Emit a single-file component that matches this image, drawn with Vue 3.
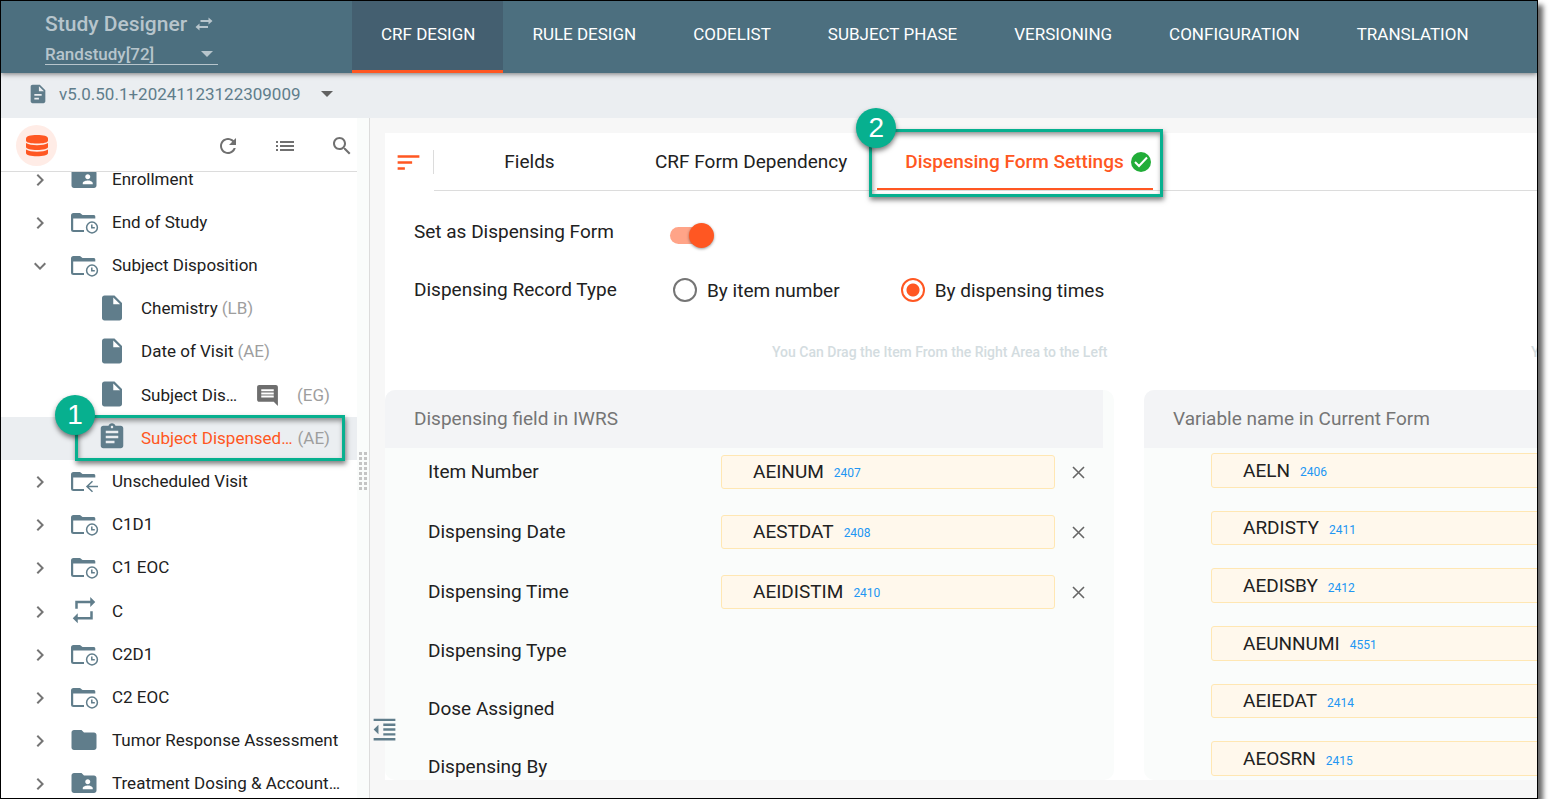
<script setup>
import { ref } from 'vue'

const ICONS = {
  chevron: 'M10 6L8.59 7.41 13.17 12l-4.58 4.59L10 18l6-6z',
  expand: 'M16.59 8.59L12 13.17 7.41 8.59 6 10l6 6 6-6z',
  folder: 'M10 4H4c-1.1 0-1.99.9-1.99 2L2 18c0 1.1.9 2 2 2h16c1.1 0 2-.9 2-2V8c0-1.1-.9-2-2-2h-8l-2-2z',
  shared: 'M20 6h-8l-2-2H4c-1.1 0-1.99.9-1.99 2L2 18c0 1.1.9 2 2 2h16c1.1 0 2-.9 2-2V8c0-1.1-.9-2-2-2zm-5 3c1.1 0 2 .9 2 2s-.9 2-2 2-2-.9-2-2 .9-2 2-2zm4 8h-8v-1c0-1.33 2.67-2 4-2s4 .67 4 2v1z',
  repeat: 'M7 6.500h10v3l4-4-4-4v3H5v6.500h2zM17 17.500H7v-3l-4 4 4 4v-3h12v-6.500h-2z',
  file: 'M6 2c-1.1 0-1.99.9-1.99 2L4 20c0 1.1.89 2 1.99 2H18c1.1 0 2-.9 2-2V8l-6-6H6zm7 7V3.5L18.5 9H13z',
  form: 'M19 3h-4.18C14.4 1.84 13.3 1 12 1c-1.3 0-2.4.84-2.82 2H5c-1.1 0-2 .9-2 2v14c0 1.1.9 2 2 2h14c1.1 0 2-.9 2-2V5c0-1.1-.9-2-2-2zm-7 0c.55 0 1 .45 1 1s-.45 1-1 1-1-.45-1-1 .45-1 1-1zm2 14H7v-2h7v2zm3-4H7v-2h10v2zm0-4H7V7h10v2z',
  comment: 'M21.99 4c0-1.1-.89-2-1.99-2H4c-1.1 0-2 .9-2 2v12c0 1.1.9 2 2 2h14l4 4-.01-18zM18 14H6v-2h12v2zm0-3H6V9h12v2zm0-3H6V6h12v2z'
}

const nav = ['CRF DESIGN', 'RULE DESIGN', 'CODELIST', 'SUBJECT PHASE', 'VERSIONING', 'CONFIGURATION', 'TRANSLATION']

const tree = [
  { name: 'Enrollment', icon: 'shared' },
  { name: 'End of Study', icon: 'clock' },
  { name: 'Subject Disposition', icon: 'clock', open: true },
  { name: 'Chemistry', icon: 'file', code: '(LB)', child: true },
  { name: 'Date of Visit', icon: 'file', code: '(AE)', child: true },
  { name: 'Subject Dis…', icon: 'file', code: '(EG)', child: true, comment: true, end: true },
  { name: 'Subject Dispensed…', icon: 'form', code: '(AE)', child: true, active: true, end: true },
  { name: 'Unscheduled Visit', icon: 'back' },
  { name: 'C1D1', icon: 'clock' },
  { name: 'C1 EOC', icon: 'clock' },
  { name: 'C', icon: 'repeat' },
  { name: 'C2D1', icon: 'clock' },
  { name: 'C2 EOC', icon: 'clock' },
  { name: 'Tumor Response Assessment', icon: 'folder' },
  { name: 'Treatment Dosing & Account…', icon: 'shared' }
]

const fields = [
  { label: 'Item Number', name: 'AEINUM', id: '2407' },
  { label: 'Dispensing Date', name: 'AESTDAT', id: '2408' },
  { label: 'Dispensing Time', name: 'AEIDISTIM', id: '2410' },
  { label: 'Dispensing Type' },
  { label: 'Dose Assigned' },
  { label: 'Dispensing By' }
]

const variables = [
  { name: 'AELN', id: '2406' },
  { name: 'ARDISTY', id: '2411' },
  { name: 'AEDISBY', id: '2412' },
  { name: 'AEUNNUMI', id: '4551' },
  { name: 'AEIEDAT', id: '2414' },
  { name: 'AEOSRN', id: '2415' }
]

const isDispensing = ref(true)
const recordType = ref('times')
const study = ref('Randstudy[72]')
</script>

<template>
  <div class="frame">
    <header class="top">
      <div class="brand">
        <div class="title">
          <span>Study Designer</span>
          <svg width="18" height="14" viewBox="0 0 18 14">
            <path d="M5.500 4H15M13 10H3" stroke="currentColor" stroke-width="2" />
            <path d="M13.500 .5v7L17.500 4zM4.500 6.500v7L.5 10z" fill="currentColor" />
          </svg>
        </div>
        <div class="study">
          <select v-model="study" aria-label="Study">
            <option>Randstudy[72]</option>
          </select>
          <svg width="12" height="6" viewBox="0 0 12 6"><path d="M0 0h12L6 6z" fill="currentColor" /></svg>
        </div>
      </div>
      <nav class="nav">
        <a v-for="(item, i) in nav" :key="item" href="#" :class="{ current: i === 0 }">{{ item }}</a>
      </nav>
    </header>

    <div class="version">
      <svg width="22" height="22" viewBox="0 0 24 24" fill="currentColor">
        <path fill-rule="evenodd" d="M14 2H6c-1.1 0-2 .9-2 2v16c0 1.1.9 2 2 2h12c1.1 0 2-.9 2-2V8l-6-6zM13 18H8v-2h5zM16 14H8v-2h8zM13 9V3.5L18.5 9z" />
      </svg>
      <span>v5.0.50.1+20241123122309009</span>
      <button class="drop" aria-label="Choose version">
        <svg width="12" height="6" viewBox="0 0 12 6"><path d="M0 0h12L6 6z" fill="currentColor" /></svg>
      </button>
    </div>

    <div class="body">
      <aside class="side">
        <div class="tools">
          <button class="db" aria-label="Data">
            <svg width="24" height="23" viewBox="0 0 24 23" fill="currentColor">
              <path d="M1 4.5C1 2 5.5 1 12 1s11 1 11 3.5v2C23 8.800 18 9.500 12 9.500S1 8.800 1 6.500z" />
              <path d="M1 9c2.500 1.800 6.500 2.200 11 2.200S20.500 10.800 23 9v4c0 2-5 3-11 3S1 15 1 13z" />
              <path d="M1 15.500c2.500 1.800 6.500 2.200 11 2.200s8.500-.4 11-2.200v3.500c0 2.300-5 3.300-11 3.300S1 21.300 1 19z" />
            </svg>
          </button>
          <button aria-label="Refresh">
            <svg width="24" height="24" viewBox="0 0 24 24" fill="currentColor"><path d="M17.65 6.35C16.2 4.9 14.21 4 12 4c-4.42 0-7.99 3.58-7.99 8s3.57 8 7.99 8c3.73 0 6.84-2.55 7.73-6h-2.08c-.82 2.33-3.04 4-5.65 4-3.31 0-6-2.69-6-6s2.69-6 6-6c1.66 0 3.14.69 4.22 1.78L13 11h7V4l-2.35 2.35z" /></svg>
          </button>
          <button aria-label="List">
            <svg width="24" height="24" viewBox="0 0 24 24" fill="currentColor"><path d="M3 13h2v-2H3v2zm0 4h2v-2H3v2zm0-8h2V7H3v2zm4 4h14v-2H7v2zm0 4h14v-2H7v2zM7 7v2h14V7H7z" /></svg>
          </button>
          <button aria-label="Search">
            <svg width="24" height="24" viewBox="0 0 24 24" fill="currentColor"><path d="M15.5 14h-.79l-.28-.27C15.41 12.59 16 11.11 16 9.5 16 5.91 13.09 3 9.5 3S3 5.91 3 9.5 5.91 16 9.5 16c1.61 0 3.09-.59 4.23-1.57l.27.28v.79l5 4.99L20.49 19l-4.99-5zm-6 0C7.01 14 5 11.99 5 9.5S7.01 5 9.5 5 14 7.01 14 9.5 11.99 14 9.5 14z" /></svg>
          </button>
        </div>
        <div class="scroll">
          <ul class="tree">
            <li v-for="(n, i) in tree" :key="i" :class="{ child: n.child, active: n.active }">
              <svg v-if="!n.child" class="arrow" width="24" height="24" viewBox="0 0 24 24"><path :d="n.open ? ICONS.expand : ICONS.chevron" /></svg>
              <svg v-if="n.icon === 'clock' || n.icon === 'back'" class="kind" width="30" height="30" viewBox="0 0 30 30">
                <path d="M4.500 5H11l2.500 2H25a1.500 1.500 0 0 1 1.300 1.500v2H4.200v11.500H15V24H4.500A2.500 2.500 0 0 1 2 21.500v-14A2.500 2.500 0 0 1 4.500 5z" />
                <g fill="none" stroke="currentColor" stroke-width="1.500">
                  <template v-if="n.icon === 'clock'">
                    <circle cx="23" cy="19.500" r="5.400" />
                    <path d="M22.800 16.500v3.300h3" />
                  </template>
                  <path v-else d="M29 19.500H18M23.500 14.300L18 19.500l5.500 5.200" />
                </g>
              </svg>
              <svg v-else class="kind solid" width="30" height="30" viewBox="0 0 24 24"><path :d="ICONS[n.icon]" /></svg>
              <span class="name">{{ n.name }}</span>
              <svg v-if="n.comment" class="comment" width="25" height="25" viewBox="0 0 24 24"><path :d="ICONS.comment" /></svg>
              <span v-if="n.code" class="code" :class="{ end: n.end }">{{ n.code }}</span>
              <div v-if="n.active" class="callout one"><b>1</b></div>
            </li>
          </ul>
        </div>
      </aside>
      <div class="grip"><i v-for="k in 16" :key="k"></i></div>

      <main class="main">
        <button class="collapse" aria-label="Collapse">
          <svg width="29" height="29" viewBox="0 0 24 24" fill="currentColor"><path d="M11 17h10v-2H11v2zm-8-5l4 4V8l-4 4zm0 9h18v-2H3v2zM3 3v2h18V3H3zm8 6h10V7H11v2zm0 4h10v-2H11v2z" /></svg>
        </button>
        <div class="card">
          <div class="tabbar">
            <button class="sort" aria-label="Sort">
              <svg width="29" height="29" viewBox="0 0 24 24" fill="currentColor"><path d="M3 18h6v-2H3v2zM3 6v2h18V6H3zm0 7h12v-2H3v2z" /></svg>
            </button>
            <div class="tabs" role="tablist">
              <button role="tab">Fields</button>
              <button role="tab">CRF Form Dependency</button>
              <button role="tab" class="on" aria-selected="true">
                <span>Dispensing Form Settings</span>
                <svg width="20" height="20" viewBox="0 0 20 20"><circle cx="10" cy="10" r="10" fill="#21ad38" /><path d="M4 10l4 4 8-8.500" fill="none" stroke="#fff" stroke-width="2" /></svg>
                <div class="callout two"><b>2</b></div>
              </button>
            </div>
          </div>

          <form class="form">
            <label for="dispensing">Set as Dispensing Form</label>
            <input id="dispensing" v-model="isDispensing" class="switch" type="checkbox">
            <span id="record">Dispensing Record Type</span>
            <div class="radios" role="radiogroup" aria-labelledby="record">
              <label><input v-model="recordType" type="radio" name="record" value="item">By item number</label>
              <label><input v-model="recordType" type="radio" name="record" value="times">By dispensing times</label>
            </div>
          </form>

          <div class="columns">
            <section class="column">
              <p class="hint">You Can Drag the Item From the Right Area to the Left</p>
              <div class="panel">
                <h2 class="narrow">Dispensing field in IWRS</h2>
                <div class="fields">
                  <div v-for="f in fields" :key="f.label" class="field" :class="{ filled: f.id }">
                    <span class="label">{{ f.label }}</span>
                    <div v-if="f.id" class="chip">{{ f.name }}<small>{{ f.id }}</small></div>
                    <button v-if="f.id" aria-label="Remove">
                      <svg width="13" height="13" viewBox="0 0 13 13"><path d="M1 1l11 11M12 1L1 12" fill="none" stroke="#666" stroke-width="1.600" /></svg>
                    </button>
                  </div>
                </div>
              </div>
            </section>
            <section class="column">
              <p class="hint">You Can Drag the Item From the Right Area to the Left</p>
              <div class="panel">
                <h2>Variable name in Current Form</h2>
                <div class="variables">
                  <div v-for="v in variables" :key="v.id" class="chip">{{ v.name }}<small>{{ v.id }}</small></div>
                </div>
              </div>
            </section>
          </div>
        </div>
      </main>
    </div>
  </div>
</template>

<style>
body {
  margin: 0;
  background: #fff;
}
</style>

<style scoped>
* {
  box-sizing: border-box;
}
.frame {
  display: flex;
  flex-direction: column;
  height: calc(100vh - 12px);
  margin-right: 12px;
  overflow: hidden;
  border: 1px solid #000;
  box-shadow: 5px 5px 5px rgba(0, 0, 0, 0.6);
  font-family: Roboto, "Liberation Sans", sans-serif;
  color: #212121;
}
button {
  padding: 0;
  border: 0;
  background: none;
  font: inherit;
  color: inherit;
}
button svg {
  display: block;
}
.top {
  position: relative;
  z-index: 1;
  display: flex;
  flex: none;
  height: 72px;
  background: #4c6f7f;
  box-shadow: 0 1px 5px rgba(0, 0, 0, 0.5);
}
.brand {
  width: 351px;
  padding: 9px 0 0 44px;
  color: #b7c5cc;
}
.title {
  display: flex;
  align-items: center;
  gap: 8px;
  font-size: 21px;
  font-weight: 500;
  line-height: 28px;
}
.study {
  display: flex;
  align-items: center;
  width: 173px;
  height: 27px;
  padding: 5px 5px 0 0;
  border-bottom: 1px solid #b7c5cc;
}
.study select {
  flex: 1;
  padding: 0;
  border: 0;
  appearance: none;
  background: none;
  font: 500 17px/20px Roboto, sans-serif;
  color: inherit;
}
.nav {
  display: flex;
}
.nav a {
  display: flex;
  align-items: center;
  padding: 0 28px 3px 29px;
  border-bottom: 3px solid transparent;
  font-size: 17px;
  color: #fff;
  text-decoration: none;
}
.nav .current {
  background: #445f70;
  border-color: #ff5722;
}
.version {
  display: flex;
  flex: none;
  align-items: center;
  height: 45px;
  padding: 0 26px 3px;
  background: #ebeef1;
  font-size: 17px;
  color: #607d8b;
}
.version span {
  margin-left: 10px;
}
.drop {
  margin-left: 20px;
  color: #616161;
}
.body {
  display: flex;
  flex: 1;
  min-height: 0;
}
.side {
  display: flex;
  flex: none;
  flex-direction: column;
  width: 356px;
  background: #fff;
}
.tools {
  display: flex;
  flex: none;
  align-items: center;
  gap: 33px;
  height: 54px;
  padding: 2px 3px 0 15px;
  border-bottom: 1px solid #dcdcdc;
  color: #707070;
}
.db {
  display: grid;
  place-items: center;
  width: 41px;
  height: 41px;
  margin-right: auto;
  border-radius: 50%;
  background: #ffece6;
  color: #ff5722;
}
.scroll {
  flex: 1;
  min-height: 0;
  overflow: hidden;
}
.tree {
  display: grid;
  grid-template-columns: minmax(0, 1fr);
  grid-auto-rows: 1fr;
  height: calc(100% + 22px);
  margin: -14px 0 0;
  padding: 0;
  list-style: none;
  font-size: 17px;
}
.tree li {
  position: relative;
  display: flex;
  align-items: center;
  padding: 0 27px;
  white-space: nowrap;
}
.tree .child {
  padding-left: 96px;
}
.tree .active {
  background: #ebeef1;
}
.arrow {
  flex: none;
  margin-right: 17px;
  fill: #757575;
}
.kind {
  flex: none;
  margin-right: 13px;
  fill: #607d8b;
  color: #607d8b;
}
.solid {
  margin-bottom: 3px;
}
.child .kind {
  margin-right: 14px;
}
.name,
.code {
  padding-bottom: 2px;
}
.active .name {
  color: #ff5722;
}
.comment {
  flex: none;
  margin-left: 18px;
  fill: #6e6e6e;
}
.code {
  margin-left: 4px;
  color: #9e9e9e;
}
.code.end {
  margin-left: auto;
}
.grip {
  display: grid;
  flex: none;
  grid-template-columns: 3px 3px;
  gap: 2px;
  align-content: center;
  justify-content: center;
  width: 13px;
  padding-top: 26px;
  border-right: 1px solid #dcdcdc;
  background: #fafcfb;
}
.grip i {
  height: 3px;
  background: #c4c4c4;
}
.main {
  position: relative;
  display: flex;
  flex: 1;
  min-width: 0;
  padding: 15px 0 18px 15px;
  background: #f7f7f7;
}
.collapse {
  position: absolute;
  bottom: 54px;
  left: 0;
  z-index: 1;
  color: #607d8b;
}
.card {
  display: flex;
  flex: 1;
  flex-direction: column;
  min-width: 0;
  background: #fff;
}
.tabbar {
  display: flex;
  height: 58px;
}
.sort {
  align-self: center;
  width: 49px;
  height: 24px;
  padding-left: 9px;
  border-right: 1px solid #dcdcdc;
  color: #ff5722;
}
.sort svg {
  margin-top: -2px;
}
.tabs {
  display: flex;
  flex: 1;
  border-bottom: 1px solid #dcdcdc;
  font-size: 19px;
}
.tabs button {
  position: relative;
  display: flex;
  align-items: center;
  justify-content: center;
  min-width: 191px;
  padding: 0 30px;
}
.tabs .on {
  gap: 7px;
  padding: 2px 2px 0 28px;
  border-bottom: 2px solid #ff5722;
  font-weight: 500;
  color: #ff5722;
}
.form {
  display: grid;
  grid-template-columns: 256px 1fr;
  grid-template-rows: 58px 58px;
  align-items: center;
  height: 128px;
  padding: 11px 0 0 29px;
  font-size: 19px;
}
.switch {
  position: relative;
  width: 44px;
  height: 25px;
  margin: 8px 0 0;
  appearance: none;
}
.switch::before {
  content: "";
  position: absolute;
  inset: 4px 4px 4px 0;
  border-radius: 9px;
  background: #ffa488;
}
.switch::after {
  content: "";
  position: absolute;
  top: 0;
  right: 0;
  width: 25px;
  height: 25px;
  border-radius: 50%;
  background: #ff5722;
  box-shadow: 0 1px 3px rgba(0, 0, 0, 0.4);
}
.radios {
  display: flex;
  gap: 61px;
  padding: 2px 0 0 3px;
}
.radios label {
  display: flex;
  align-items: center;
  gap: 10px;
}
.radios input {
  width: 24px;
  height: 24px;
  margin: 0;
  border: 2px solid #757575;
  border-radius: 50%;
  appearance: none;
}
.radios input:checked {
  border-color: #ff5722;
  background: radial-gradient(circle, #ff5722 6px, transparent 7px);
}
.columns {
  display: grid;
  flex: 1;
  grid-template-columns: repeat(2, minmax(729px, 1fr));
  gap: 30px;
  min-height: 0;
}
.column {
  display: flex;
  flex-direction: column;
  min-height: 0;
}
.hint {
  flex: none;
  height: 71px;
  margin: 0;
  padding: 23px 0 0 387px;
  font-size: 14px;
  font-weight: 500;
  line-height: 20px;
  white-space: nowrap;
  color: #d3dce0;
}
.panel {
  flex: 1;
  display: flex;
  flex-direction: column;
  min-height: 0;
  border-radius: 10px;
  overflow: hidden;
  background: #fafcfb;
}
.panel h2 {
  flex: none;
  height: 58px;
  margin: 0;
  padding-left: 29px;
  background: #f3f4f6;
  font-size: 19px;
  font-weight: 400;
  line-height: 58px;
  color: #757575;
}
.panel .narrow {
  margin-right: 11px;
}
.fields {
  display: flex;
  flex-direction: column;
  gap: 26px;
  padding: 7px 29px 0 43px;
  font-size: 19px;
}
.field {
  display: flex;
  flex: none;
  align-items: center;
  height: 32px;
}
.field.filled {
  height: 34px;
}
.label {
  width: 293px;
  padding-bottom: 2px;
}
.chip {
  display: flex;
  align-items: center;
  padding-left: 31px;
  border: 1px solid #ffe7b3;
  border-radius: 3px;
  background: #fff8ec;
  font-size: 19px;
}
.field .chip {
  flex: 1;
  height: 34px;
  margin-right: 17px;
  padding-bottom: 2px;
}
.chip small {
  margin: 4px 0 0 10px;
  font-size: 12px;
  color: #2196f3;
}
.variables {
  display: grid;
  flex: 1;
  grid-auto-rows: 1fr;
  gap: 23px;
  padding: 5px 67px 4px;
}
.callout {
  position: absolute;
  border: 3px solid #07b08f;
  box-shadow: 1px 3px 5px rgba(0, 0, 0, 0.5), inset 1px 3px 5px rgba(0, 0, 0, 0.4);
}
.callout b {
  position: absolute;
  display: grid;
  place-items: center;
  width: 40px;
  height: 40px;
  border-radius: 50%;
  background: #07b08f;
  box-shadow: 0 3px 5px rgba(0, 0, 0, 0.5);
  font: 28px "Liberation Sans", sans-serif;
  color: #fff;
}
.one {
  inset: -2px 12px -1px 74px;
}
.one b {
  top: -23px;
  left: -23px;
}
.two {
  inset: -4px -10px -9px -8px;
}
.two b {
  top: -24px;
  left: -16px;
}
</style>
